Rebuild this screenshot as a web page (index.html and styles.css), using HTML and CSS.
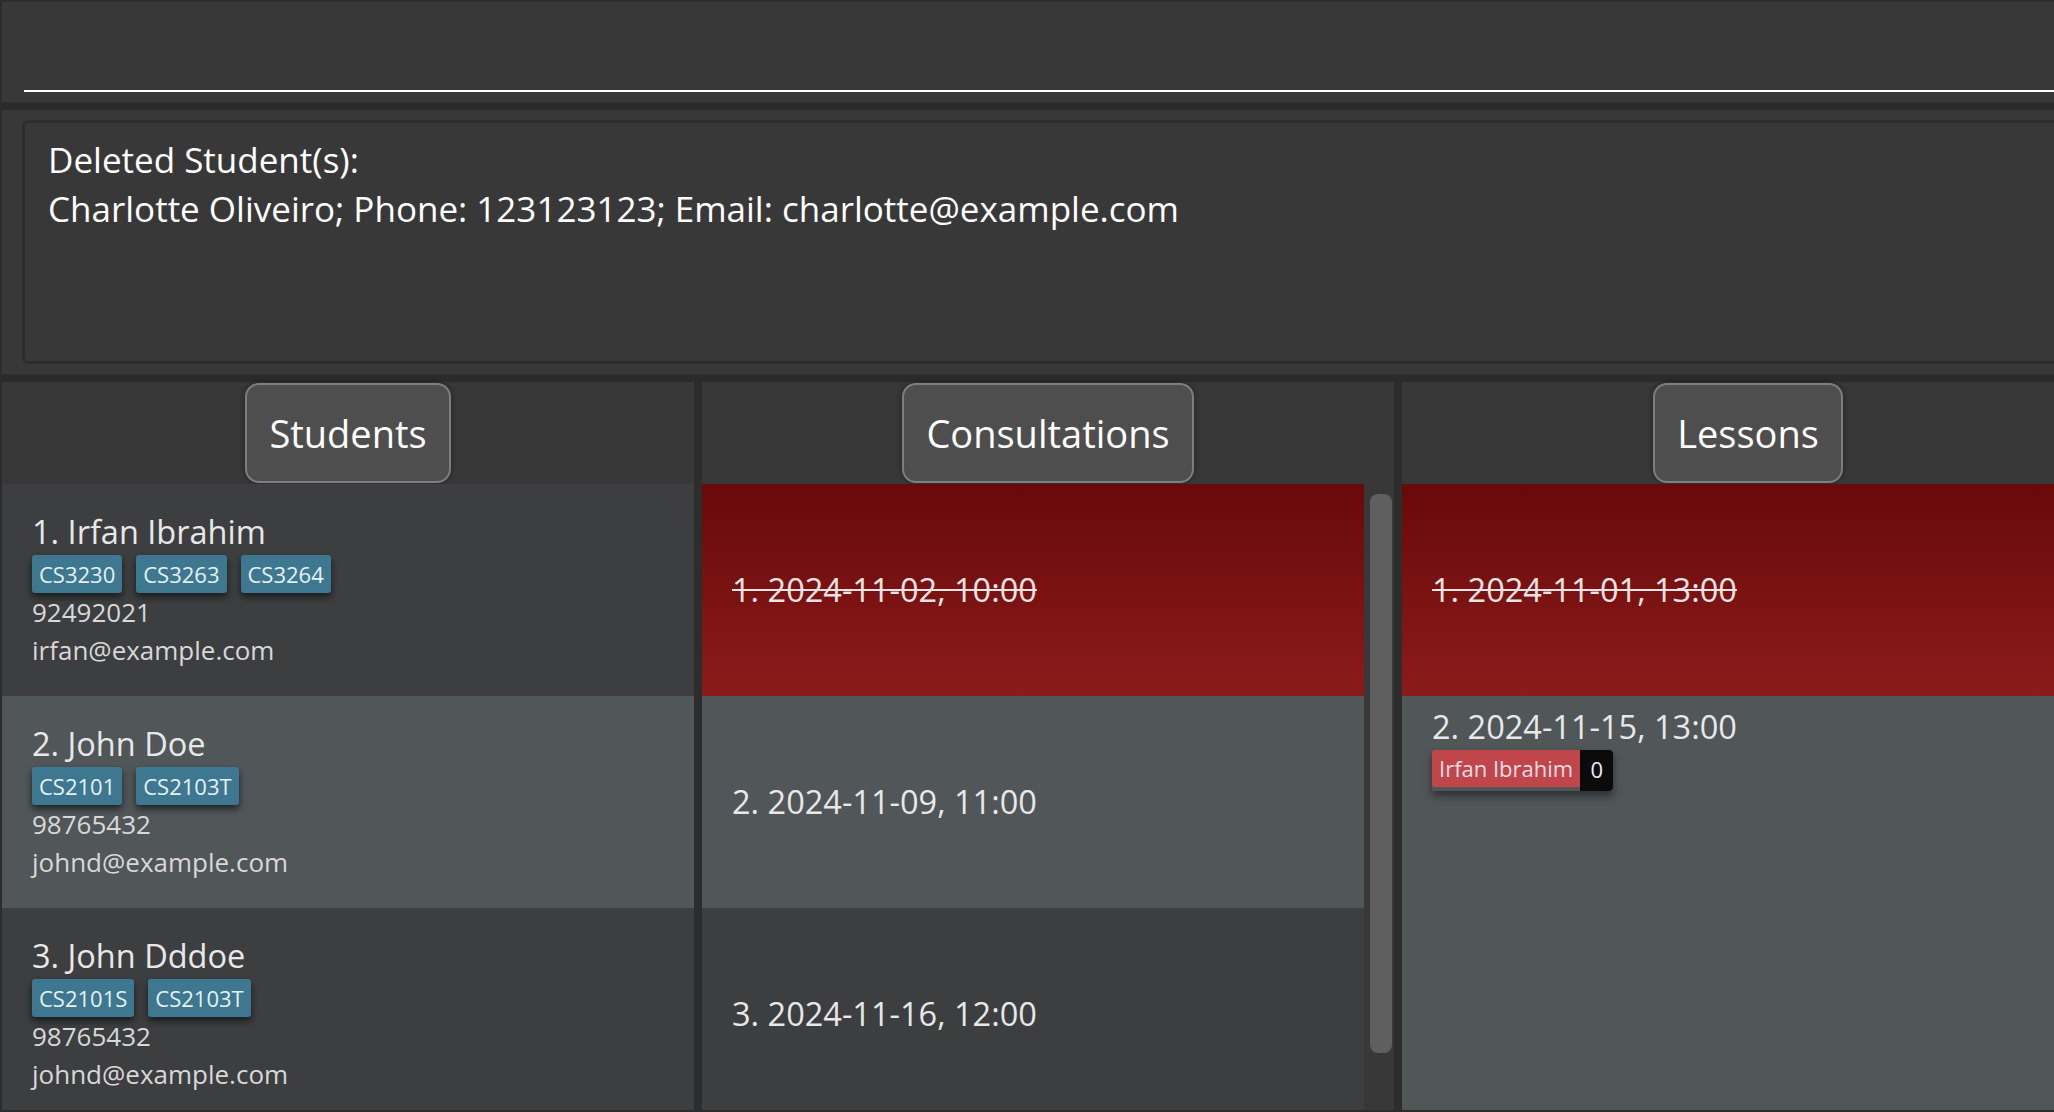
FILE: index.html
```html
<!DOCTYPE html>
<html lang="en">
<head>
<meta charset="utf-8">
<title>TAHub</title>
<link rel="stylesheet" href="styles.css">
</head>
<body>
<div class="app">
  <div class="command-bar">
    <div class="command-input"></div>
  </div>
  <div class="gap"></div>
  <div class="result-panel">
    <div class="result-box">
      <p class="result-line">Deleted Student(s):</p>
      <p class="result-line">Charlotte Oliveiro; Phone: 123123123; Email: charlotte@example.com</p>
    </div>
  </div>
  <div class="gap"></div>
  <div class="lists">
    <section class="panel students">
      <div class="panel-header"><span class="panel-title">Students</span></div>
      <div class="list">
        <div class="row student dark">
          <div class="name">1. Irfan Ibrahim</div>
          <div class="tags">
            <span class="tag">CS3230</span>
            <span class="tag">CS3263</span>
            <span class="tag">CS3264</span>
          </div>
          <div class="detail">92492021</div>
          <div class="detail">irfan@example.com</div>
        </div>
        <div class="row student light">
          <div class="name">2. John Doe</div>
          <div class="tags">
            <span class="tag">CS2101</span>
            <span class="tag">CS2103T</span>
          </div>
          <div class="detail">98765432</div>
          <div class="detail">johnd@example.com</div>
        </div>
        <div class="row student dark">
          <div class="name">3. John Dddoe</div>
          <div class="tags">
            <span class="tag">CS2101S</span>
            <span class="tag">CS2103T</span>
          </div>
          <div class="detail">98765432</div>
          <div class="detail">johnd@example.com</div>
        </div>
      </div>
    </section>
    <div class="divider"></div>
    <section class="panel consultations">
      <div class="panel-header"><span class="panel-title">Consultations</span></div>
      <div class="list-wrap">
        <div class="list">
          <div class="row centered past"><span class="date struck">1. 2024-11-02, 10:00</span></div>
          <div class="row centered light"><span class="date">2. 2024-11-09, 11:00</span></div>
          <div class="row centered dark"><span class="date">3. 2024-11-16, 12:00</span></div>
        </div>
        <div class="scrollbar"><div class="thumb"></div></div>
      </div>
    </section>
    <div class="divider"></div>
    <section class="panel lessons">
      <div class="panel-header"><span class="panel-title">Lessons</span></div>
      <div class="list lesson-list">
        <div class="row centered past"><span class="date struck">1. 2024-11-01, 13:00</span></div>
        <div class="row lesson light">
          <div class="name">2. 2024-11-15, 13:00</div>
          <div class="tags">
            <span class="attendee"><span class="attendee-name">Irfan Ibrahim</span><span class="attendee-count">0</span></span>
          </div>
        </div>
      </div>
    </section>
  </div>
</div>
</body>
</html>
```

FILE: styles.css
```css
html, body {
  margin: 0;
  padding: 0;
  background: #2c2c2c;
  overflow: hidden;
}

body {
  font-family: "Open Sans", "Noto Sans", sans-serif;
  color: #ffffff;
}

.app {
  width: 2096px;
  height: 1112px;
  box-sizing: border-box;
  padding: 2px 0 2px 2px;
  background: #2c2c2c;
  display: flex;
  flex-direction: column;
}

.command-bar {
  height: 100px;
  box-sizing: border-box;
  padding: 30px 0 10px 22px;
  background: #383838;
}

.command-input {
  height: 58px;
  border-bottom: 2px solid #ffffff;
}

.gap {
  height: 8px;
  background: #2b2b2b;
}

.result-panel {
  height: 264px;
  box-sizing: border-box;
  padding: 10px 0 10px 20px;
  background: #383838;
}

.result-box {
  height: 100%;
  box-sizing: border-box;
  border: 3px solid #2d2d2d;
  border-radius: 6px;
  padding: 12px 23px;
}

.result-line {
  margin: 0;
  font-size: 35px;
  line-height: 49px;
  color: #ffffff;
}

.lists {
  flex: 1;
  display: flex;
  min-height: 0;
}

.panel {
  width: 692px;
  flex: none;
  display: flex;
  flex-direction: column;
  background: #383838;
}

.divider {
  width: 8px;
  flex: none;
  background: #2d2d2d;
}

.panel-header {
  height: 102px;
  flex: none;
  display: flex;
  justify-content: center;
  align-items: center;
  background: #383838;
}

.panel-title {
  height: 100px;
  box-sizing: border-box;
  display: flex;
  align-items: center;
  padding: 0 22px;
  border: 2px solid #7e7e7e;
  border-radius: 14px;
  background: #4e4e4e;
  font-size: 38px;
  color: #ffffff;
  box-shadow: 0 0 6px rgba(0, 0, 0, 0.35);
}

.list {
  flex: 1;
  min-height: 0;
  overflow: hidden;
}

.list-wrap {
  flex: 1;
  min-height: 0;
  display: flex;
}

.scrollbar {
  width: 30px;
  flex: none;
  box-sizing: border-box;
  padding: 10px 2px 0 6px;
  background: #383838;
}

.thumb {
  height: 559px;
  background: #5f5f5f;
  border-radius: 8px;
}

.lesson-list {
  background: #515658;
}

.row {
  height: 212px;
  box-sizing: border-box;
}

.row.dark {
  background: #3c3e40;
}

.row.light {
  background: #515658;
}

.row.past {
  background: linear-gradient(#690909, #8b1b1b);
}

.student {
  padding: 28px 0 0 30px;
}

.lesson {
  padding: 11px 0 0 30px;
}

.centered {
  display: flex;
  align-items: center;
  padding-left: 30px;
}

.name,
.date {
  font-size: 32.5px;
  line-height: 40px;
  color: #e8e8e8;
  white-space: nowrap;
}

.date.struck {
  color: #f2e4e4;
  text-decoration: line-through;
  text-decoration-thickness: 2px;
}

.tags {
  display: flex;
  gap: 14px;
  margin-top: 3px;
}

.tag {
  height: 38px;
  padding: 0 7px;
  font-size: 22px;
  line-height: 38px;
  color: #e4f1f6;
  background: #3d7790;
  border-radius: 3px;
  box-shadow: 0 4px 7px rgba(0, 0, 0, 0.6);
}

.detail {
  font-size: 26px;
  line-height: 38px;
  color: #d8d8d8;
  white-space: nowrap;
}

.student .detail:first-of-type {
  margin-top: -1px;
}

.attendee {
  display: flex;
  align-items: flex-start;
  box-shadow: 0 5px 8px rgba(0, 0, 0, 0.45);
}

.attendee-name {
  height: 37px;
  padding: 0 7px;
  font-size: 22px;
  line-height: 37px;
  color: #f6dde2;
  background: #c0464b;
  border-radius: 3px 0 0 3px;
}

.attendee-count {
  height: 41px;
  width: 33px;
  box-sizing: border-box;
  text-align: center;
  font-size: 22px;
  line-height: 39px;
  color: #e6eeff;
  background: #0b0b0b;
  border-radius: 0 4px 4px 0;
}
```
